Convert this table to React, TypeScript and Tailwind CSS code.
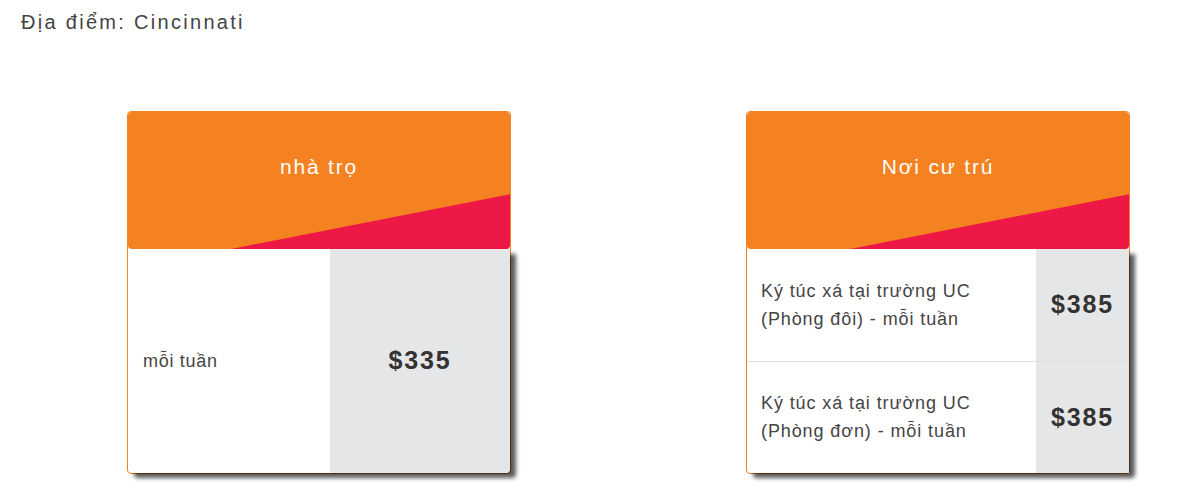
export default function App() {
  return (
    <div className="w-[1195px] h-[496px] bg-white font-['Liberation_Sans',Arial,sans-serif] text-[#444]">
      <p className="pl-[21px] pt-[9px] text-[20px] leading-[26px] tracking-[2.3px]">Địa điểm: Cincinnati</p>

      <div className="flex gap-[235px] pl-[127px] mt-[76px]">
        {/* card 1 */}
        <div className="w-[384px] h-[363px] flex flex-col border border-[#F48221] rounded-[4px]">
          <Header title="nhà trọ" />
          <div className="flex flex-1 shadow-[6px_5px_4px_rgba(0,0,0,0.65)] rounded-b-[4px]">
            <div className="flex-1 flex items-center pl-[15px] text-[18px] tracking-[0.7px]">mỗi tuần</div>
            <div className="w-[180px] bg-[#E5E6E8] flex items-center justify-center text-[25px] font-bold text-[#333] tracking-[1.8px] rounded-br-[4px]">
              $335
            </div>
          </div>
        </div>

        {/* card 2 */}
        <div className="w-[384px] h-[363px] flex flex-col border border-[#F48221] rounded-[4px]">
          <Header title="Nơi cư trú" />
          <div className="flex flex-col flex-1 shadow-[6px_5px_4px_rgba(0,0,0,0.65)] rounded-b-[4px]">
            <Row label1="Ký túc xá tại trường UC" label2="(Phòng đôi) - mỗi tuần" price="$385" divider />
            <Row label1="Ký túc xá tại trường UC" label2="(Phòng đơn) - mỗi tuần" price="$385" />
          </div>
        </div>
      </div>
    </div>
  )
}

function Header({ title }: { title: string }) {
  return (
    <div className="relative h-[137px] bg-[#F48221] rounded-[4px] overflow-hidden flex justify-center pt-[42px]">
      <div className="absolute inset-0 bg-[#EE1846] [clip-path:polygon(27%_100%,100%_60%,100%_100%)]" />
      <span className="relative h-[26px] leading-[26px] text-white text-[21px] tracking-[1.8px]">{title}</span>
    </div>
  )
}

function Row({ label1, label2, price, divider }: { label1: string; label2: string; price: string; divider?: boolean }) {
  return (
    <div className={`flex flex-1 ${divider ? "border-b border-[#DDDDDD]" : ""}`}>
      <div className="flex-1 flex flex-col justify-center pl-[14px] text-[18px] leading-[28px] tracking-[0.9px]">
        <span>{label1}</span>
        <span>{label2}</span>
      </div>
      <div className="w-[93px] bg-[#E5E6E8] flex items-center justify-center text-[25px] font-bold text-[#333] tracking-[1.8px]">
        {price}
      </div>
    </div>
  )
}
